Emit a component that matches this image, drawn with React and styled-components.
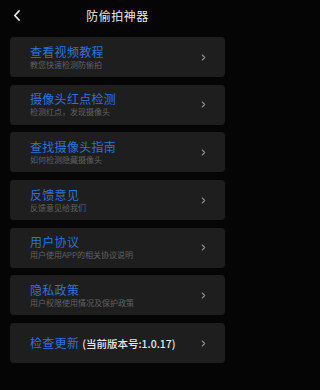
import React from 'react';
import styled, { createGlobalStyle } from 'styled-components';

const GlobalStyle = createGlobalStyle`
  html, body {
    margin: 0;
    padding: 0;
    background: #050505;
  }
  body {
    font-family: "Noto Sans CJK SC", "Noto Sans", sans-serif;
  }
`;

const Page = styled.div`
  width: 235px;
  height: 390px;
  background: #050505;
  overflow: hidden;
`;

const Header = styled.div`
  height: 30px;
  display: flex;
  align-items: center;
  justify-content: center;
  position: relative;
`;

const BackButton = styled.div`
  position: absolute;
  left: 11px;
  top: 9px;
  width: 12px;
  height: 12px;
  display: flex;
  align-items: center;
  justify-content: center;
`;

const Title = styled.div`
  color: #e8e8e8;
  font-size: 12px;
  letter-spacing: 0.5px;
`;

const List = styled.div`
  display: flex;
  flex-direction: column;
  gap: 7.7px;
  padding: 7px 10px 0 10px;
`;

const Card = styled.div`
  height: 40px;
  background: #1e1e1e;
  border-radius: 4px;
  display: flex;
  align-items: center;
  padding: 0 18px 0 20px;
  box-sizing: border-box;
`;

const Texts = styled.div`
  flex: 1;
  display: flex;
  flex-direction: column;
  gap: 1px;
`;

const ItemTitle = styled.div`
  color: #2c72d8;
  font-size: 12px;
  line-height: 14px;
  letter-spacing: 0.3px;
`;

const ItemSub = styled.div`
  color: #616161;
  font-size: 8px;
  line-height: 10px;
`;

const Version = styled.span`
  color: #e6e6e6;
  font-size: 10.5px;
  font-weight: 500;
  letter-spacing: 0;
  margin-left: 3px;
`;

const Arrow = styled.div`
  width: 8px;
  display: flex;
  justify-content: center;
`;

const Chevron = ({ color = '#8c8c8c', size = 5, stroke = 1.3 }) => (
  <svg width={size} height={size * 1.4} viewBox="0 0 6 8.4">
    <path d="M1.5 1.2 L4.5 4.2 L1.5 7.2" fill="none" stroke={color} strokeWidth={stroke} strokeLinecap="round" strokeLinejoin="round" />
  </svg>
);

const items = [
  { title: '查看视频教程', sub: '教您快速检测防偷拍' },
  { title: '摄像头红点检测', sub: '检测红点，发现摄像头' },
  { title: '查找摄像头指南', sub: '如何检测隐藏摄像头' },
  { title: '反馈意见', sub: '反馈意见给我们' },
  { title: '用户协议', sub: '用户使用APP的相关协议说明' },
  { title: '隐私政策', sub: '用户权限使用情况及保护政策' },
];

function App() {
  return (
    <>
      <GlobalStyle />
      <Page>
        <Header>
          <BackButton>
            <svg width="8" height="11" viewBox="0 0 8 11">
              <path d="M6 1 L1.8 5.5 L6 10" fill="none" stroke="#e8e8e8" strokeWidth="1.8" strokeLinecap="round" strokeLinejoin="round" />
            </svg>
          </BackButton>
          <Title>防偷拍神器</Title>
        </Header>
        <List>
          {items.map(item => (
            <Card key={item.title}>
              <Texts>
                <ItemTitle>{item.title}</ItemTitle>
                <ItemSub>{item.sub}</ItemSub>
              </Texts>
              <Arrow><Chevron /></Arrow>
            </Card>
          ))}
          <Card>
            <Texts>
              <ItemTitle>检查更新<Version>(当前版本号:1.0.17)</Version></ItemTitle>
            </Texts>
            <Arrow><Chevron /></Arrow>
          </Card>
        </List>
      </Page>
    </>
  );
}

export default App;
